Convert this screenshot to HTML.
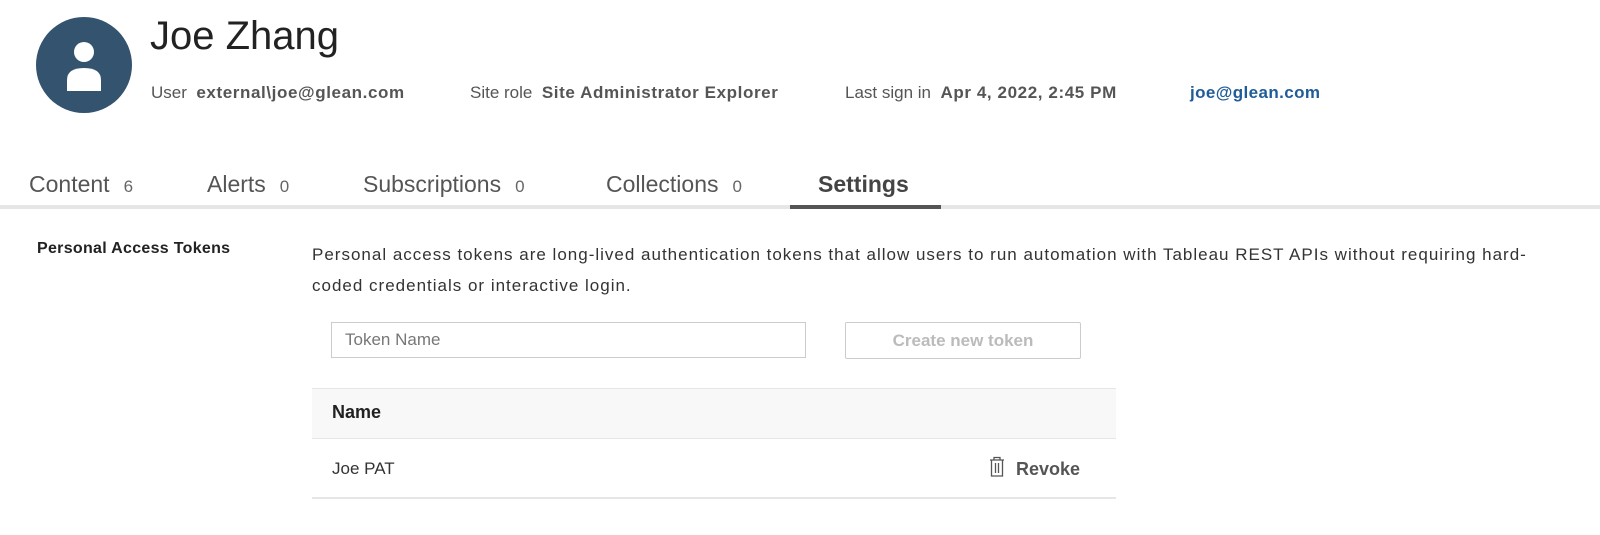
<!DOCTYPE html>
<html><head><style>
body{margin:0;width:1600px;height:535px;background:#fff;font-family:"Liberation Sans",sans-serif;position:relative;overflow:hidden;color:#333}
.a{position:absolute;white-space:nowrap}
.l{color:#555}
.b{font-weight:bold;color:#555;letter-spacing:0.6px}
.tab{position:absolute;top:171px;font-size:23px;color:#555}
.tab span{font-size:17px;color:#666;margin-left:14px}
</style></head><body>
<svg class="a" style="left:36px;top:17px" width="96" height="96"><circle cx="48" cy="48" r="48" fill="#33536f"/><circle cx="48" cy="35" r="10" fill="#fff"/><path d="M31 74 V63 Q31 51 48 51 Q65 51 65 63 V74 Z" fill="#fff"/></svg>
<div class="a" style="left:150px;top:14px;font-size:40px;color:#222">Joe Zhang</div>
<div class="a" style="left:151px;top:83px;font-size:17px"><span class="l">User</span>&nbsp; <span class="b">external\joe@glean.com</span></div>
<div class="a" style="left:470px;top:83px;font-size:17px"><span class="l">Site role</span>&nbsp; <span class="b">Site Administrator Explorer</span></div>
<div class="a" style="left:845px;top:83px;font-size:17px"><span class="l">Last sign in</span>&nbsp; <span class="b">Apr 4, 2022, 2:45 PM</span></div>
<div class="a" style="left:1190px;top:83px;font-size:17px;color:#1f5c99;font-weight:bold;letter-spacing:0.4px">joe@glean.com</div>
<div class="tab" style="left:29px">Content<span>6</span></div>
<div class="tab" style="left:207px">Alerts<span>0</span></div>
<div class="tab" style="left:363px">Subscriptions<span>0</span></div>
<div class="tab" style="left:606px">Collections<span>0</span></div>
<div class="tab" style="left:818px;color:#444;font-weight:bold">Settings</div>
<div class="a" style="left:0;top:205px;width:1600px;height:4px;background:#e6e6e6"></div>
<div class="a" style="left:790px;top:205px;width:151px;height:4px;background:#555"></div>
<div class="a" style="left:37px;top:240px;font-size:16px;font-weight:bold;color:#222;letter-spacing:0.3px">Personal Access Tokens</div>
<div class="a" style="left:312px;top:239px;font-size:17px;line-height:31px;color:#333;white-space:normal;width:1232px;letter-spacing:1px">Personal access tokens are long-lived authentication tokens that allow users to run automation with Tableau REST APIs without requiring hard-coded credentials or interactive login.</div>
<div class="a" style="left:331px;top:322px;width:473px;height:34px;border:1px solid #ccc;box-sizing:content-box"></div>
<div class="a" style="left:345px;top:330px;font-size:17px;color:#777">Token Name</div>
<div class="a" style="left:845px;top:322px;width:234px;height:35px;border:1px solid #ccc;border-radius:2px;text-align:center;line-height:35px;font-size:17px;font-weight:bold;color:#bbb">Create new token</div>
<div class="a" style="left:312px;top:388px;width:804px;height:49px;background:#f8f8f8;border-top:1px solid #e6e6e6;border-bottom:1px solid #e6e6e6"></div>
<div class="a" style="left:332px;top:402px;font-size:18px;font-weight:bold;color:#222">Name</div>
<div class="a" style="left:332px;top:459px;font-size:17px;color:#333">Joe PAT</div>
<svg class="a" style="left:989px;top:456px" width="16" height="22"><path d="M1 4H15M5 4V1.5H11V4M2.5 4V20H13.5V4M6.5 7V17M9.5 7V17" stroke="#555" stroke-width="1.3" fill="none"/></svg>
<div class="a" style="left:1016px;top:459px;font-size:18px;font-weight:bold;color:#555">Revoke</div>
<div class="a" style="left:312px;top:497px;width:804px;height:2px;background:#e6e6e6"></div>
</body></html>
